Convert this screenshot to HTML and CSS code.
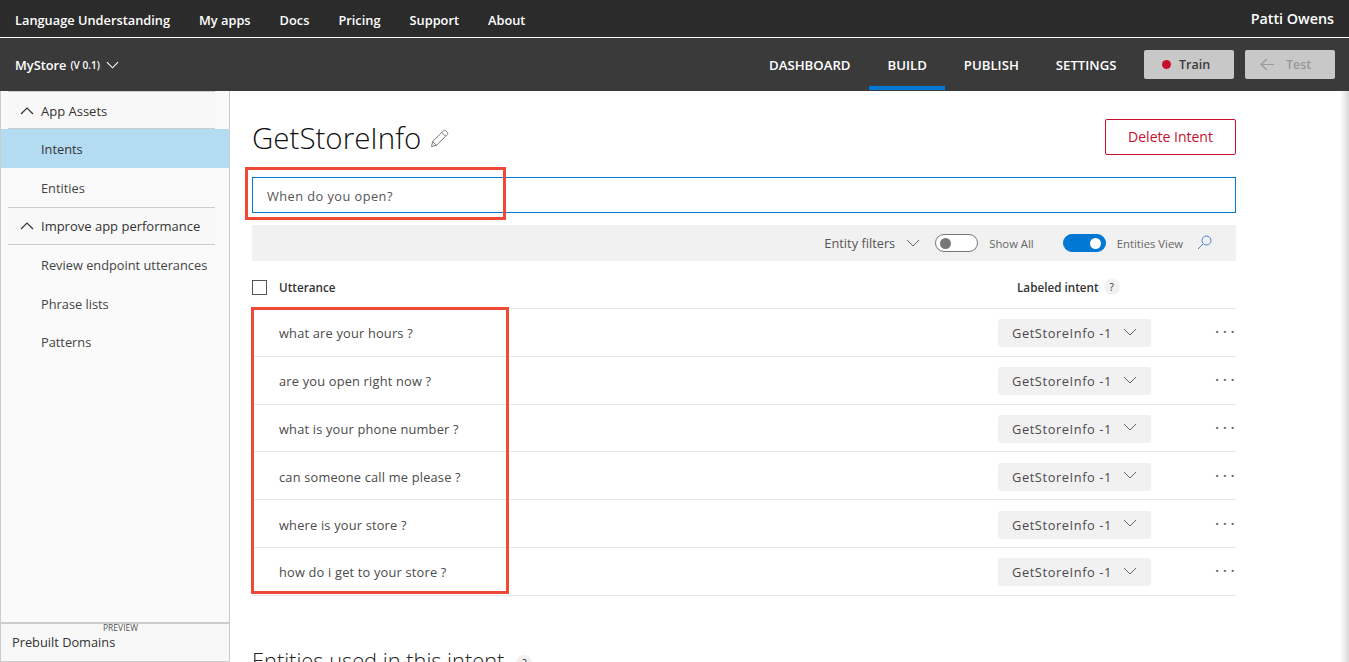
FILE: index.html
```html
<!DOCTYPE html>
<html lang="en">
<head>
  <meta charset="UTF-8" />
  <title>Language Understanding - GetStoreInfo</title>
  <link rel="stylesheet" href="styles.css">
</head>
<body>
<header class="topbar">
  <nav class="topnav">
    <a class="brand">Language Understanding</a>
    <a>My apps</a>
    <a>Docs</a>
    <a>Pricing</a>
    <a>Support</a>
    <a>About</a>
  </nav>
  <span class="user">Patti Owens</span>
</header>

<div class="appbar">
  <div class="appname">
    <b>MyStore</b> <small>(V 0.1)</small>
    <svg class="chev" width="13" height="8" viewBox="0 0 14 8"><path d="M1 1l6 6 6-6" /></svg>
  </div>
  <nav class="tabs">
    <a>DASHBOARD</a>
    <a class="active">BUILD</a>
    <a>PUBLISH</a>
    <a>SETTINGS</a>
  </nav>
  <button class="appbtn"><i class="dot"></i>Train</button>
  <button class="appbtn off">
    <svg width="15" height="13" viewBox="0 0 15 13"><path d="M14 6.500H1M7 1L1 6.500 7 12" /></svg>Test
  </button>
</div>

<div class="layout">
  <aside class="sidebar">
    <div class="side-top">
      <div class="side-head">
        <svg class="chev" width="14" height="8" viewBox="0 0 14 8"><path d="M1 7l6-6 6 6" /></svg>App Assets
      </div>
      <a class="side-item selected">Intents</a>
      <a class="side-item">Entities</a>
      <div class="side-head">
        <svg class="chev" width="14" height="8" viewBox="0 0 14 8"><path d="M1 7l6-6 6 6" /></svg>Improve app performance
      </div>
      <a class="side-item">Review endpoint utterances</a>
      <a class="side-item">Phrase lists</a>
      <a class="side-item">Patterns</a>
    </div>
    <div class="side-foot">
      <span class="preview">PREVIEW</span>
      <span>Prebuilt Domains</span>
    </div>
  </aside>

  <main class="content">
    <div class="title-row">
      <h1>GetStoreInfo</h1>
      <svg class="pencil" width="19" height="19" viewBox="0 0 19 19"><path d="M1.500 17.500l1.200-5L13.500 1.700a1.600 1.600 0 0 1 2.200 0l1.600 1.600a1.600 1.600 0 0 1 0 2.200L6.500 16.300zM2.700 12.500l3.800 3.800M11.800 3.400l3.800 3.800" /></svg>
      <button class="delete">Delete Intent</button>
    </div>

    <div class="utter-input">When do you open?</div>

    <div class="filters">
      <span class="filter-name">Entity filters</span>
      <svg class="chev-grey" width="14" height="8" viewBox="0 0 14 8"><path d="M1 1l6 6 6-6" /></svg>
      <span class="toggle"><i></i></span>
      <span class="filter-label">Show All</span>
      <span class="toggle on"><i></i></span>
      <span class="filter-label">Entities View</span>
      <svg class="search" width="15" height="15" viewBox="0 0 15 15"><circle cx="9.500" cy="5.500" r="4.500" /><path d="M6.200 8.800L1 14" /></svg>
    </div>

    <div class="row head">
      <span class="checkbox"></span>
      <span class="col-utter">Utterance</span>
      <span class="col-intent">Labeled intent <i class="help">?</i></span>
    </div>

    <div class="row"><span class="col-utter">what are your hours ?</span><span class="pill">GetStoreInfo -1<svg class="chev-grey" width="14" height="8" viewBox="0 0 14 8"><path d="M1 1l6 6 6-6" /></svg></span><span class="more">...</span></div>
    <div class="row"><span class="col-utter">are you open right now ?</span><span class="pill">GetStoreInfo -1<svg class="chev-grey" width="14" height="8" viewBox="0 0 14 8"><path d="M1 1l6 6 6-6" /></svg></span><span class="more">...</span></div>
    <div class="row"><span class="col-utter">what is your phone number ?</span><span class="pill">GetStoreInfo -1<svg class="chev-grey" width="14" height="8" viewBox="0 0 14 8"><path d="M1 1l6 6 6-6" /></svg></span><span class="more">...</span></div>
    <div class="row"><span class="col-utter">can someone call me please ?</span><span class="pill">GetStoreInfo -1<svg class="chev-grey" width="14" height="8" viewBox="0 0 14 8"><path d="M1 1l6 6 6-6" /></svg></span><span class="more">...</span></div>
    <div class="row"><span class="col-utter">where is your store ?</span><span class="pill">GetStoreInfo -1<svg class="chev-grey" width="14" height="8" viewBox="0 0 14 8"><path d="M1 1l6 6 6-6" /></svg></span><span class="more">...</span></div>
    <div class="row"><span class="col-utter">how do i get to your store ?</span><span class="pill">GetStoreInfo -1<svg class="chev-grey" width="14" height="8" viewBox="0 0 14 8"><path d="M1 1l6 6 6-6" /></svg></span><span class="more">...</span></div>

    <h2>Entities used in this intent <i class="help">?</i></h2>

    <!-- red callouts drawn on top of the screenshot -->
    <div class="callout callout-input"></div>
    <div class="callout callout-rows"></div>
  </main>
</div>
</body>
</html>
```

FILE: styles.css
```css
:root { --blue:#0078d4; --line:#e6e6e6; --text:#333; --callout:#ef4a37; }
*{box-sizing:border-box}
html,body{height:100%;overflow:hidden}
body{margin:0;background:#fff;color:var(--text);font-family:"Open Sans","Noto Sans",Arial,sans-serif;font-size:12.800px}
svg{fill:none;stroke:currentColor;stroke-width:1.2;flex:none}
button{font-family:inherit;cursor:pointer}

/* top bars */
.topbar{height:38px;background:#2b2b2b;border-bottom:1px solid #fff;color:#fff;display:flex;align-items:center;justify-content:space-between;padding:2px 15px 0;font-weight:600}
.topnav{display:flex;gap:29px}
.user{font-size:14.300px;margin-top:-3px}
.appbar{height:53px;background:#3a3a3a;color:#fff;display:flex;align-items:center;padding:0 14px 0 15px;font-weight:600}
.appname{margin-right:auto;display:flex;align-items:center;gap:4px}
.appname b{font-weight:600}
.appname small{font-size:10px}
.appname .chev{margin-left:2px}
.tabs{display:flex;align-self:flex-start;margin-right:-2px}
.tabs a{display:flex;align-items:center;padding:6px 18.500px 0;height:52px;font-size:13.200px;border-bottom:4px solid transparent}
.tabs .active{border-bottom-color:var(--blue)}
.appbtn{width:90px;height:29px;margin-left:11px;padding:0 0 0 18px;background:#c8c8c8;border:0;border-radius:2px;color:#3a3a3a;font-size:12.500px;font-weight:600;display:flex;align-items:center;gap:8px}
.appbtn.off{color:#999;gap:11px;padding-left:15px}
.dot{width:9px;height:9px;border-radius:50%;background:#c8102e}

/* sidebar */
.layout{display:flex;height:571px}
.sidebar{width:230px;flex:none;background:#fafafa;border-left:1px solid #ccc;border-right:1px solid #ccc;display:flex;flex-direction:column}
.side-top{flex:1}
.side-head{height:38px;margin:0 14px 0 7px;padding:1px 0 0 12px;border-top:1px solid #ccc;border-bottom:1px solid #ccc;display:flex;align-items:center;gap:7px;background:#f8f8f8;color:#333;font-size:13px}
.side-item + .side-head{padding-top:0}
.side-item{display:flex;align-items:center;height:39px;padding:1px 0 0 40px;color:#444}
.side-item:last-child{height:38px;padding-top:0}
.side-item.selected{background:#b3dbf2;color:#333}
.side-foot{height:40px;background:#f8f8f8;border-top:2px solid #ccc;border-bottom:1px solid #ccc;padding:9px 0 0 11px;position:relative;color:#333}
.preview{position:absolute;left:102px;top:-2px;font-size:8.500px;color:#555}

/* main column */
.content{position:relative;width:1119px;padding:0 113px 0 22px;background:linear-gradient(to left,#d8d8d8,#fff 9px)}
.title-row{height:86px;display:flex;align-items:center;padding-top:6px}
h1{margin:0;font-size:29.500px;font-weight:300;color:#111}
.pencil{margin:2px 0 0 9px;color:#777;stroke-width:1}
.delete{margin-left:auto;width:131px;height:36px;padding-bottom:3px;background:#fff;border:1px solid #c8102e;border-radius:2px;color:#c8102e;font-size:14px}
.utter-input{height:36px;border:1px solid var(--blue);padding:2px 0 0 14px;display:flex;align-items:center;color:#555;letter-spacing:.45px}
.filters{height:36px;margin-top:12px;background:#f1f1f1;display:flex;align-items:center;justify-content:flex-end;padding-right:24px;color:#555}
.filter-label{font-size:11.300px;color:#666}
.chev-grey{color:#666;stroke-width:1}
.filters .chev-grey{margin:0 15px 0 11px}
.toggle{width:43px;height:18px;border:1px solid #777;border-radius:9px;background:#fff;margin-right:11px;display:flex;align-items:center;padding:0 4px}
.toggle i{width:11px;height:11px;border-radius:50%;background:#777}
.toggle.on{background:var(--blue);border-color:var(--blue);justify-content:flex-end;margin-left:29px}
.toggle.on i{background:#fff}
.search{color:#4a7fd6;margin:-1px 0 0 14px;stroke-width:1}

.row{height:47.800px;display:flex;align-items:center;border-bottom:1px solid var(--line);padding:2px 0 0 27px;color:#4a4a4a;letter-spacing:.2px}
.row.head{height:48px;color:#333;font-weight:600;font-size:11.700px;padding:4px 0 0;letter-spacing:0}
.checkbox{width:15px;height:15px;border:1px solid #555;margin:1px 12px 0 0}
.col-utter{flex:1}
.col-intent{width:219px;display:flex;align-items:center;gap:5px}
.help{width:16px;height:16px;border-radius:50%;background:#f1f1f1;font-style:normal;font-size:10px;font-weight:400;display:inline-flex;align-items:center;justify-content:center}
.pill{width:153px;height:28px;background:#f1f1f1;border-radius:2px;display:flex;align-items:center;padding-left:14px;color:#4a4a4a;letter-spacing:.6px}
.pill svg{margin-left:11px;margin-top:-3px}
.more{width:87px;margin:-14px -2px 0 0;text-align:right;font-size:18px;letter-spacing:3px;color:#666}

h2{margin:50px 0 0;font-size:21.800px;font-weight:300;color:#222;display:flex;align-items:center;gap:12px}
h2 .help{margin-top:5px}

/* red annotation boxes */
.callout{position:absolute;border:3px solid var(--callout);pointer-events:none}
.callout-input{left:15px;top:76px;width:261px;height:53px}
.callout-rows{left:21px;top:216px;width:258px;height:287px}
```
